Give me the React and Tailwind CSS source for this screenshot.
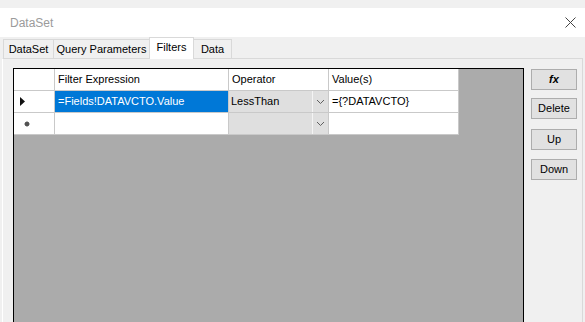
import React from "react";

const F = { fontFamily: '"Liberation Sans", Arial, sans-serif' };

function Chevron() {
  return (
    <svg width="9" height="6" viewBox="0 0 9 6">
      <path d="M1 1 L4.5 4.5 L8 1" fill="none" stroke="#606060" strokeWidth="1" />
    </svg>
  );
}

function Combo({ text }) {
  return (
    <div className="flex h-full w-full bg-[#dfdfdf]">
      <div className="flex flex-1 items-center pl-[2px] text-black">{text}</div>
      <div className="flex w-[16px] items-center justify-center border-l border-[#f4f4f4]">
        <Chevron />
      </div>
    </div>
  );
}

function Row({ head, c1, c2, c3, selected }) {
  return (
    <div className="flex h-[22px] shrink-0">
      <div className="flex w-[41px] items-center border-b border-r border-[#c9c9c9] bg-white pl-[6px]">{head}</div>
      <div
        className={
          "flex w-[174px] items-center border-b border-r border-[#c9c9c9] pl-[3px] " +
          (selected ? "bg-[#0078d7] text-white" : "bg-white text-black")
        }
      >
        {c1}
      </div>
      <div className="flex w-[100px] items-stretch border-b border-r border-[#c9c9c9] bg-white">{c2}</div>
      <div className="flex w-[130px] items-center border-b border-r border-[#c9c9c9] bg-white pl-[3px] text-black">{c3}</div>
    </div>
  );
}

function Btn({ children, className = "" }) {
  return (
    <div
      className={
        "flex h-[21px] w-[46px] items-center justify-center border border-[#adadad] bg-[#e1e1e1] text-[11px] text-black " +
        className
      }
    >
      {children}
    </div>
  );
}

export default function App() {
  return (
    <div className="flex h-[322px] w-[585px] flex-col overflow-hidden bg-[#f0f0f0] text-[11px]" style={F}>
      <div className="h-[8px] shrink-0" />
      <div className="flex h-[29px] shrink-0 items-center justify-between bg-white pl-[10px] pr-[9px]">
        <span className="text-[12px] text-[#9b9b9b]">DataSet</span>
        <svg width="11" height="11" viewBox="0 0 11 11">
          <path d="M0.5 0.5 L10.5 10.5 M10.5 0.5 L0.5 10.5" stroke="#444" strokeWidth="1" />
        </svg>
      </div>
      <div className="flex h-[21px] shrink-0 items-end pl-[3px]">
        <div className="flex h-[19px] w-[50px] items-center justify-center border-l border-t border-[#d9d9d9] bg-[#f0f0f0]">DataSet</div>
        <div className="flex h-[19px] w-[96px] items-center justify-center border-l border-t border-[#d9d9d9] bg-[#f0f0f0]">Query Parameters</div>
        <div className="relative z-10 -mb-px flex h-[22px] w-[45px] items-center justify-center border-x border-t border-[#d9d9d9] bg-white pb-[2px]">Filters</div>
        <div className="flex h-[19px] w-[38px] items-center justify-center border-r border-t border-[#d9d9d9] bg-[#f0f0f0]">Data</div>
      </div>
      <div className="mx-[2px] flex flex-1 border border-[#d9d9d9] border-l-white bg-[#f0f0f0] pl-[10px] pt-[9px]">
        <div className="flex h-[260px] w-[511px] shrink-0 flex-col border border-black bg-[#ababab]">
          <Row head="" c1={<span>Filter Expression</span>} c2={<div className="flex items-center pl-[3px]">Operator</div>} c3="Value(s)" />
          <Row
            selected
            head={
              <svg width="6" height="9" viewBox="0 0 6 9">
                <path d="M0 0 L5 4.5 L0 9 Z" fill="#111" />
              </svg>
            }
            c1="=Fields!DATAVCTO.Value"
            c2={<Combo text="LessThan" />}
            c3="={?DATAVCTO}"
          />
          <Row
            head={
              <svg width="8" height="8" viewBox="0 0 8 8" className="ml-[3px]">
                <circle cx="4" cy="4" r="2" fill="#333" />
                <path d="M4 1 V7 M1 4 H7 M2 2 L6 6 M6 2 L2 6" stroke="#555" strokeWidth="0.8" />
              </svg>
            }
            c1=""
            c2={<Combo text="" />}
            c3=""
          />
        </div>
        <div className="ml-[7px] flex flex-col pt-[1px]">
          <Btn className="font-bold italic">fx</Btn>
          <Btn className="mt-[8px]">Delete</Btn>
          <Btn className="mt-[10px]">Up</Btn>
          <Btn className="mt-[9px]">Down</Btn>
        </div>
      </div>
    </div>
  );
}
